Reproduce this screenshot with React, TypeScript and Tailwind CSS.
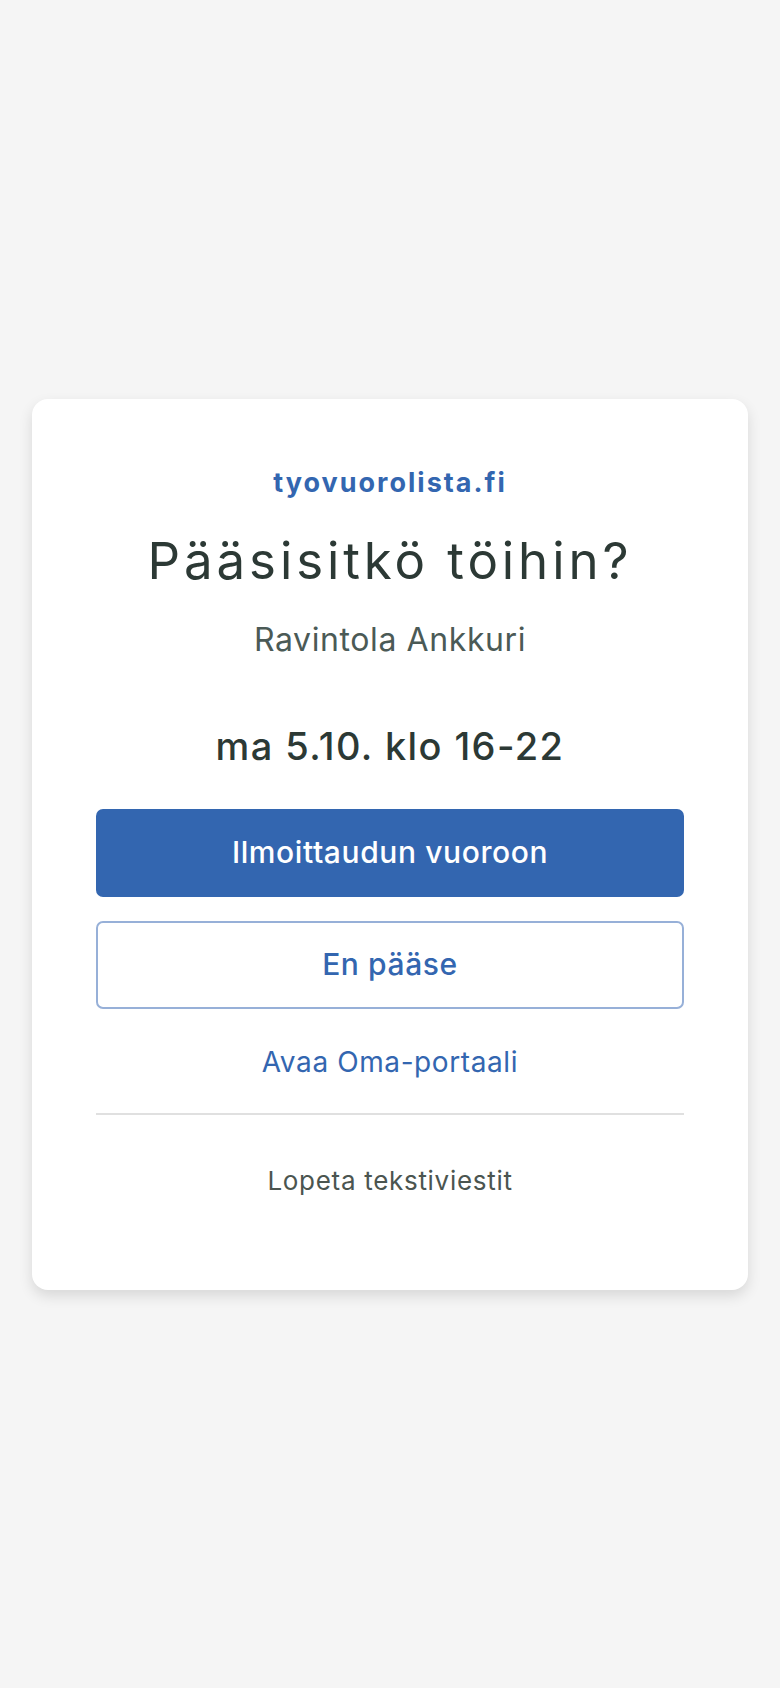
const font = { fontFamily: "Inter, 'Open Sans', sans-serif" };

export default function App() {
  return (
    <div
      className="min-h-screen bg-[#f5f5f5] flex items-center justify-center px-8"
      style={font}
    >
      <div className="w-full bg-white rounded-[16px] shadow-[0_6px_14px_rgba(0,0,0,0.12)] px-16 pt-[68px] pb-[93px] flex flex-col items-center text-center">
        {/* Brand */}
        <div className="text-[27px] leading-[32px] font-bold tracking-[2px] text-[#3366b0]">
          tyovuorolista.fi
        </div>

        <h1 className="mt-[34px] text-[51px] leading-[56px] font-normal tracking-[3.9px] text-[#2c3935]">
          Pääsisitkö töihin?
        </h1>

        <div className="mt-[31px] text-[32px] leading-[40px] tracking-[0.6px] text-[#4b5a56]">
          Ravintola Ankkuri
        </div>

        <div className="mt-[62px] text-[38px] leading-[48px] font-medium tracking-[1.4px] text-[#2c3935]">
          ma 5.10. klo 16-22
        </div>

        {/* Actions */}
        <button className="mt-[39px] w-full h-[88px] rounded-[7px] bg-[#3366b0] text-white text-[30px] font-medium tracking-[0.6px]">
          Ilmoittaudun vuoroon
        </button>

        <button className="mt-6 w-full h-[88px] rounded-[7px] border-2 border-[#97b0d8] bg-white text-[#3366b0] text-[30px] font-medium tracking-[0.6px]">
          En pääse
        </button>

        <a className="mt-[35px] text-[28px] leading-[36px] tracking-[0.6px] text-[#3366b0]">
          Avaa Oma-portaali
        </a>

        <div className="mt-[33px] w-full h-[2px] bg-[#e0e0e0]" />

        <a className="mt-[50px] text-[26px] leading-[32px] tracking-[0.7px] text-[#4b5550]">
          Lopeta tekstiviestit
        </a>
      </div>
    </div>
  );
}
